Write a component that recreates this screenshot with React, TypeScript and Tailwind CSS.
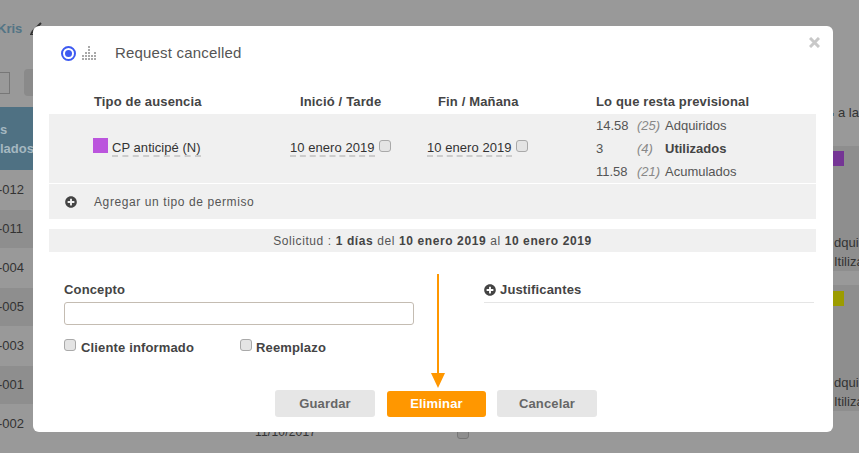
import { FaPlusCircle } from 'react-icons/fa';

const leftRows = [
  { code: '-012', cls: 'h-10 bg-[#999999]' },
  { code: '-011', cls: 'h-[38px] bg-[#8e8e8e]' },
  { code: '-004', cls: 'h-10 bg-[#999999]' },
  { code: '-005', cls: 'h-[38px] bg-[#8e8e8e]' },
  { code: '-003', cls: 'h-10 bg-[#999999]' },
  { code: '-001', cls: 'h-[38px] bg-[#8e8e8e]' },
  { code: '-002', cls: 'h-10 bg-[#999999]' },
];

const balances = [
  { value: '14.58', prev: '(25)', label: 'Adquiridos', bold: false },
  { value: '3', prev: '(4)', label: 'Utilizados', bold: true },
  { value: '11.58', prev: '(21)', label: 'Acumulados', bold: false },
];

const dotColumns = [2, 3, 5, 2, 3];

function Check() {
  return (
    <input
      type="checkbox"
      className="appearance-none block w-[12px] h-[12px] rounded-[3px] border border-[#a9a9a9] bg-[#e4e4e4] shrink-0"
    />
  );
}

function DottedDate({ text }: { text: string }) {
  return <span className="block border-b-2 border-dashed border-[#cccccc] text-[#333333] leading-[15px]">{text}</span>;
}

function StatusIcons() {
  return (
    <div className="flex items-center gap-[6px]">
      <span className="w-[15px] h-[15px] rounded-full border-[2px] border-[#3d5af1] flex items-center justify-center">
        <span className="w-[7px] h-[7px] rounded-full bg-[#3d5af1]" />
      </span>
      <svg width="14" height="14" viewBox="0 0 14 14" fill="#a9a9a9">
        {dotColumns.map((n, c) =>
          Array.from({ length: n }).map((_, r) => <rect key={`${c}-${r}`} x={c * 3} y={12 - r * 3} width="2" height="2" />)
        )}
      </svg>
    </div>
  );
}

function Backdrop() {
  return (
    <div className="flex justify-between h-full text-[13px] text-[#333333] tracking-normal">
      <div className="w-[33px] overflow-hidden">
        <div className="h-[69px] pt-[20px] -ml-[3px] text-[#527485] font-bold leading-[18px]">Kris</div>
        <div className="h-[38px] flex gap-[14px]">
          <div className="w-[10px] h-[22px] mt-[3px] border border-l-0 border-[#777777] bg-[#999999]" />
          <div className="w-[9px] h-[27px] bg-[#8a8a8a] rounded-l" />
        </div>
        <div className="h-[63px] bg-[#4f7183] text-[#a5b8c1] font-bold flex flex-col justify-center leading-[19px]">
          <span>s</span>
          <span className="whitespace-nowrap">lados</span>
        </div>
        {leftRows.map((r) => (
          <div key={r.code} className={`${r.cls} flex items-center whitespace-nowrap -ml-[2px] pl-0`}>
            {r.code}
          </div>
        ))}
      </div>
      <div className="w-[26px] overflow-hidden whitespace-nowrap pt-[103px]">
        <div className="h-[43px] leading-[20px] flex">
          <span className="w-[1px] h-[3px] mt-[10px] bg-[#527485]" />
          <span className="ml-[4px]">a la</span>
        </div>
        <div className="h-[125px] bg-[#8e8e8e] flex flex-col">
          <span className="block w-[11px] h-[15px] bg-[#753595] mt-[5px]" />
          <div className="mt-auto leading-[19px] pl-[1px]">
            <div>dqui</div>
            <div>Itiliza</div>
          </div>
        </div>
        <div className="h-[14px]" />
        <div className="h-[126px] bg-[#8e8e8e] flex flex-col">
          <span className="block w-[11px] h-[15px] bg-[#9c9c00] mt-[6px]" />
          <div className="mt-auto leading-[19px] pl-[1px]">
            <div>dqui</div>
            <div>Itiliza</div>
          </div>
        </div>
      </div>
    </div>
  );
}

export default function App() {
  return (
    <div className="relative w-[859px] h-[453px] overflow-hidden bg-[#999999] font-['Liberation_Sans',Arial,sans-serif] tracking-[0.05px]">
      <Backdrop />
      <svg className="absolute left-[29px] top-[22px]" width="13" height="14" viewBox="0 0 13 14" fill="none" stroke="#333333">
        <path d="M12 1 L4 9 L2 12" strokeWidth="2" />
        <path d="M1 12.5 H6" strokeWidth="1" />
      </svg>
      <div className="absolute left-[255px] top-[423px] text-[12px] tracking-[0.2px] text-[#333333]">11/10/2017</div>
      <div className="absolute left-[457px] top-[427px] w-[12px] h-[12px] rounded-[3px] border border-[#777777] bg-[#8e8e8e]" />

      <div className="absolute left-[33px] top-[26px] w-[800px] h-[406px] bg-white rounded-[6px] pl-[16px] pr-[17px] text-[13px] text-[#444444]">
        <svg className="absolute right-[13px] top-[11px]" width="11" height="11" viewBox="0 0 11 11" stroke="#c8c8c8" strokeWidth="3">
          <path d="M1 1 L10 10 M10 1 L1 10" />
        </svg>

        <div className="flex items-center h-[54px] pl-[12px]">
          <StatusIcons />
          <span className="ml-[19px] text-[15px] text-[#555555] tracking-[0.18px]">Request cancelled</span>
        </div>

        <div className="grid grid-cols-[45px_206px_138px_158px_1fr] h-[34px] items-center pt-[9px] font-bold text-[#444444] tracking-[0.15px] whitespace-nowrap">
          <span />
          <span>Tipo de ausencia</span>
          <span>Inició / Tarde</span>
          <span>Fin / Mañana</span>
          <span>Lo que resta previsional</span>
        </div>

        <div className="grid grid-cols-[44px_197px_137px_169px_1fr] h-[69px] items-center bg-[#f0f0f0] whitespace-nowrap">
          <span />
          <div className="flex items-start gap-[4px] self-start mt-[24px]">
            <span className="w-[15px] h-[15px] bg-[#bb55dd]" />
            <span className="mt-[2px]">
              <DottedDate text="CP anticipé (N)" />
            </span>
          </div>
          <div className="flex items-start gap-[4px] self-start mt-[26px]">
            <DottedDate text="10 enero 2019" />
            <Check />
          </div>
          <div className="flex items-start gap-[4px] self-start mt-[26px]">
            <DottedDate text="10 enero 2019" />
            <Check />
          </div>
          <div className="flex flex-col leading-[23px] tracking-normal">
            {balances.map((b) => (
              <div key={b.label} className="flex">
                <span className="w-[41px] text-[#555555]">{b.value}</span>
                <span className="w-[28px] italic text-[#888888]">{b.prev}</span>
                <span className={b.bold ? 'font-bold' : 'text-[#555555]'}>{b.label}</span>
              </div>
            ))}
          </div>
        </div>

        <div className="flex items-center h-[35px] mt-[1px] bg-[#f0f0f0] text-[12px] tracking-[0.6px] text-[#555555]">
          <FaPlusCircle className="ml-[16px] w-[12px] h-[12px] text-[#444444]" />
          <span className="ml-[17px]">Agregar un tipo de permiso</span>
        </div>

        <div className="h-[23px] mt-[10px] bg-[#f0f0f0] flex items-center justify-center text-[12px] tracking-[0.6px] text-[#555555] whitespace-pre">
          Solicitud : <b className="text-[#444444]">1 días</b> del <b className="text-[#444444]">10 enero 2019</b> al <b className="text-[#444444]">10 enero 2019</b>
        </div>

        <div className="flex mt-[29px] pl-[15px]">
          <div className="w-[350px]">
            <div className="pt-px font-bold leading-[16px] text-[#444444] tracking-[0.15px]">Concepto</div>
            <input className="block w-[350px] h-[23px] mt-[4px] border border-[#c4bcb2] rounded-[3px] bg-white" />
            <div className="flex mt-[14px] font-bold tracking-[0.15px]">
              <label className="flex items-start gap-[5px] w-[176px]">
                <Check />
                <span className="mt-[1px] leading-[16px]">Cliente informado</span>
              </label>
              <label className="flex items-start gap-[4px]">
                <Check />
                <span className="mt-[1px] leading-[16px]">Reemplazo</span>
              </label>
            </div>
          </div>
          <div className="ml-[70px] w-[330px] h-[22px] pb-[3px] border-b border-[#e5e5e5] flex items-center gap-[4px] font-bold tracking-[0.15px]">
            <FaPlusCircle className="w-[12px] h-[12px] text-[#444444]" />
            <span>Justificantes</span>
          </div>
        </div>

        <div className="flex justify-center items-center gap-[12px] mt-[34px] pl-[7px] font-bold tracking-[0.15px]">
          <button className="w-[100px] h-[27px] rounded-[3px] bg-[#e6e6e6] text-[#666666]">Guardar</button>
          <button className="w-[99px] h-[26px] rounded-[3px] bg-[#ff9700] text-white">Eliminar</button>
          <button className="w-[100px] h-[27px] -ml-px rounded-[3px] bg-[#e6e6e6] text-[#666666]">Cancelar</button>
        </div>

        <svg className="absolute left-[398px] top-[248px]" width="14" height="114" viewBox="0 0 14 114" fill="#ff9700">
          <rect x="6" y="0" width="2" height="100" />
          <path d="M0 99 H14 L7 114 Z" />
        </svg>
      </div>
    </div>
  );
}
